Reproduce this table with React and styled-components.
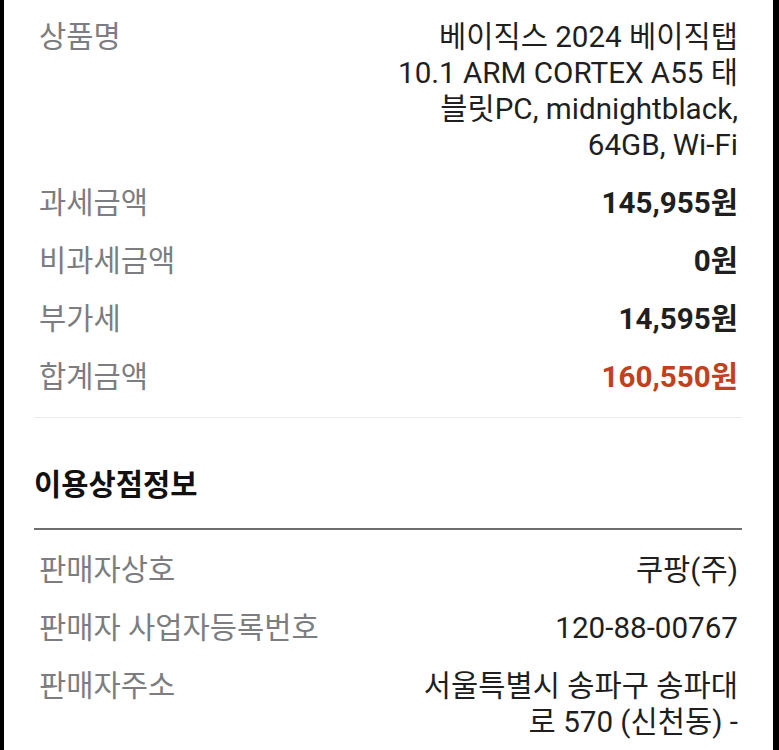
import styled, { createGlobalStyle } from 'styled-components';

const GlobalStyle = createGlobalStyle`
  html, body {
    margin: 0;
    padding: 0;
    background: #000;
  }
  body {
    font-family: Roboto, "Noto Sans CJK KR", sans-serif;
  }
`;

const Screen = styled.div`
  box-sizing: border-box;
  margin: 0 6px 0 4px;
  min-height: 750px;
  padding: 8px 31px 0 30px;
  background: #fff;
`;

const InfoList = styled.dl`
  margin: 0;
  padding: ${({ $top }) => $top || 0}px 0 11px;
  border-bottom: ${({ $ruled }) => ($ruled ? '1px solid #ecebee' : 'none')};
`;

const InfoRow = styled.div`
  display: flex;
  justify-content: space-between;
  align-items: flex-start;
  gap: 24px;
  padding: 11px 4px 11px 5px;
`;

const Label = styled.dt`
  flex-shrink: 0;
  font-size: 29.6px;
  line-height: 36px;
  color: #7b7d80;
  white-space: nowrap;
`;

const Value = styled.dd`
  margin: 0;
  text-align: right;
  font-size: 29.6px;
  line-height: 36px;
  font-weight: ${({ $bold }) => ($bold ? 700 : 400)};
  color: ${({ $accent }) => ($accent ? '#c33f1d' : '#1f1f1f')};
`;

const Line = styled.span`
  display: block;
  white-space: nowrap;
`;

const SectionHeader = styled.div`
  margin: 0;
  padding: 49px 0 25px;
  border-bottom: 2px solid #6f6f6f;
`;

const SectionTitle = styled.h2`
  margin: 0;
  font-size: 29.6px;
  line-height: 36px;
  font-weight: 700;
  color: #111;
`;

const payment = [
  {
    label: '상품명',
    lines: ['베이직스 2024 베이직탭', '10.1 ARM CORTEX A55 태', '블릿PC, midnightblack,', '64GB, Wi-Fi'],
  },
  { label: '과세금액', lines: ['145,955원'], bold: true },
  { label: '비과세금액', lines: ['0원'], bold: true },
  { label: '부가세', lines: ['14,595원'], bold: true },
  { label: '합계금액', lines: ['160,550원'], bold: true, accent: true },
];

const store = [
  { label: '판매자상호', lines: ['쿠팡(주)'] },
  { label: '판매자 사업자등록번호', lines: ['120-88-00767'] },
  { label: '판매자주소', lines: ['서울특별시 송파구 송파대', '로 570 (신천동) -'] },
];

const Rows = ({ items }) =>
  items.map((item) => (
    <InfoRow key={item.label}>
      <Label>{item.label}</Label>
      <Value $bold={item.bold} $accent={item.accent}>
        {item.lines.map((line) => (
          <Line key={line}>{line}</Line>
        ))}
      </Value>
    </InfoRow>
  ));

const App = () => {
  return (
    <>
      <GlobalStyle />
      <Screen>
        <InfoList $ruled>
          <Rows items={payment} />
        </InfoList>
        <SectionHeader>
          <SectionTitle>이용상점정보</SectionTitle>
        </SectionHeader>
        <InfoList $top={11}>
          <Rows items={store} />
        </InfoList>
      </Screen>
    </>
  );
};

export default App;
